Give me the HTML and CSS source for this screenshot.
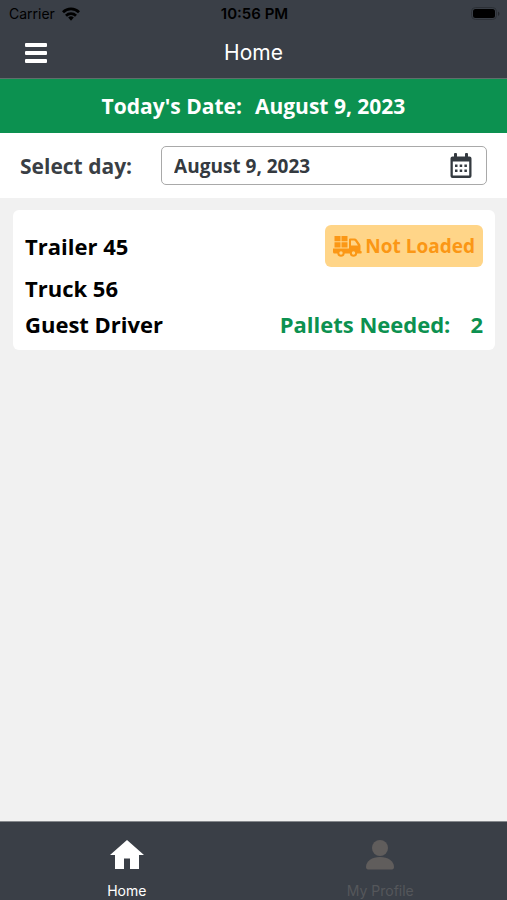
FILE: index.html
```html
<!DOCTYPE html>
<html lang="en">
<head>
    <meta charset="utf-8">
    <meta name="viewport" content="width=device-width, initial-scale=1">
    <title>Home</title>
    <link rel="stylesheet" href="styles.css">
</head>
<body>

<header class="top">
    <div class="status">
        <div class="carrier">
            <span>Carrier</span>
            <svg width="18" height="14" viewBox="0 0 18 14" fill="none" stroke="currentColor" stroke-width="2.8">
                <path d="M1 5.200a11.500 11.500 0 0 1 16 0"/>
                <path d="M4 8.700a7.200 7.200 0 0 1 10 0"/>
                <path d="M9 13.800l-2.800-3.200a4.200 4.200 0 0 1 5.600 0z" fill="currentColor" stroke="none"/>
            </svg>
        </div>
        <span class="time">10:56 PM</span>
        <svg class="battery" width="29" height="14" viewBox="0 0 29 14">
            <rect x="0.5" y="0.5" width="25" height="12" rx="4" fill="none" stroke="#2c3036"/>
            <rect x="2" y="2" width="22" height="9" rx="2.5" fill="#000"/>
            <path d="M27 4.500v4.500c2-1 2-3.500 0-4.500z" fill="#24272c"/>
        </svg>
    </div>
    <div class="navbar">
        <button class="menu" type="button" aria-label="Menu">
            <svg width="22" height="20" viewBox="0 0 22 20" fill="#fff">
                <rect y="0" width="22" height="4" rx="1"/>
                <rect y="8" width="22" height="4" rx="1"/>
                <rect y="16" width="22" height="4" rx="1"/>
            </svg>
        </button>
        <h1>Home</h1>
    </div>
</header>

<div class="today">
    <span>Today's Date:</span>
    <span>August 9, 2023</span>
</div>

<div class="picker">
    <label for="day">Select day:</label>
    <div class="field">
        <input type="text" id="day" value="August 9, 2023" readonly>
        <button class="calendar" type="button" aria-label="Open calendar">
            <svg width="22" height="26" viewBox="0 0 22 26" fill="#343a40">
                <path fill-rule="evenodd" d="M2.500 3.500H4V1a1 1 0 0 1 1-1h1a1 1 0 0 1 1 1v2.500h8V1a1 1 0 0 1 1-1h1a1 1 0 0 1 1 1v2.500h1.500A2 2 0 0 1 21.500 5.500V23a2 2 0 0 1-2 2h-17a2 2 0 0 1-2-2V5.500a2 2 0 0 1 2-2zM2.800 8.500v14h16.400v-14z"/>
                <path d="M5 11.500h2.500V14H5zM9.700 11.500h2.500V14H9.700zM14.400 11.500h2.500V14h-2.500zM5 16.500h2.500V19H5zM9.700 16.500h2.500V19H9.700zM14.400 16.500h2.500V19h-2.500z"/>
            </svg>
        </button>
    </div>
</div>

<main>
    <article class="card">
        <div class="row trailer">
            <span>Trailer 45</span>
            <span class="badge">
                <svg width="29" height="21" viewBox="0 0 29 21" fill="#fb9715">
                    <path d="M1.500 0h6v5.200h-6zM8.500 0h6v5.200h-6zM1.500 6.200h6v5.200h-6zM8.500 6.200h6v5.200h-6z"/>
                    <path fill-rule="evenodd" d="M0 12.500h16V3.500a1 1 0 0 1 1-1h4.500c1 0 1.800.4 2.400 1.200l3 4.300c.4.600.6 1.200.6 2v5h.500a.7.700 0 0 1 .7.700v1a.8.800 0 0 1-.8.800H1.500A1.500 1.500 0 0 1 0 16zM18 4.500V9.500h7l-2.800-4.200c-.3-.5-.7-.8-1.200-.8z"/>
                    <circle cx="8" cy="17" r="2.700" fill="#ffd588" stroke="#fb9715" stroke-width="2"/>
                    <circle cx="20.500" cy="17" r="2.700" fill="#ffd588" stroke="#fb9715" stroke-width="2"/>
                </svg>
                Not Loaded
            </span>
        </div>
        <div class="row">
            <span>Truck 56</span>
        </div>
        <div class="row">
            <span>Guest Driver</span>
            <span class="pallets"><span>Pallets Needed:</span><span>2</span></span>
        </div>
    </article>
</main>

<nav class="tabs">
    <a class="tab active" href="#home">
        <svg width="34" height="30" viewBox="0 0 34 30" fill="currentColor">
            <path d="M17 0l17 15h-5v14h-9V18.500h-6V29H5V15H0z"/>
        </svg>
        <span>Home</span>
    </a>
    <a class="tab" href="#profile">
        <svg width="34" height="30" viewBox="0 0 34 30" fill="#605d5c">
            <circle cx="17" cy="8" r="8"/>
            <path d="M3 27c0-6 6-10 14-10s14 4 14 10c0 1.500-.8 2.500-2 2.500H5c-1.200 0-2-1-2-2.500z"/>
        </svg>
        <span>My Profile</span>
    </a>
</nav>

</body>
</html>
```
FILE: styles.css
```css
* {
    box-sizing: border-box;
}
body {
    margin: 0;
    height: 100vh;
    display: flex;
    flex-direction: column;
    overflow: hidden;
    background-color: #f1f1f1;
    font-family: "Open Sans", "Noto Sans", sans-serif;
    font-size: 22px;
    font-weight: 700;
    color: #000;
}
svg {
    display: block;
    flex: none;
}
button {
    padding: 0;
    border: 0;
    background: none;
    cursor: pointer;
}

/* status bar and title */
.top {
    background-color: #3a3f47;
    border-bottom: 1px solid #5f6f6c;
    font-family: Inter, "Liberation Sans", sans-serif;
}
.status {
    display: grid;
    grid-template-columns: 1fr auto 1fr;
    align-items: center;
    height: 27px;
    padding: 0 7px 0 9px;
    font-size: 14px;
    font-weight: 400;
}
.carrier {
    display: flex;
    align-items: center;
    gap: 7px;
}
.time {
    font-size: 15px;
    font-weight: 600;
}
.battery {
    justify-self: end;
}
.navbar {
    display: grid;
    grid-template-columns: 1fr auto 1fr;
    align-items: center;
    height: 51px;
    padding: 0 25px;
}
.navbar h1 {
    margin: 0;
    font-size: 21px;
    font-weight: 400;
    color: #fff;
}
.menu {
    justify-self: start;
}

.today {
    display: flex;
    justify-content: center;
    gap: 13px;
    padding: 12px 0;
    font-size: 21px;
    line-height: 30px;
    background-color: #0c9150;
    color: #fff;
}

/* day picker */
.picker {
    display: flex;
    align-items: center;
    gap: 29px;
    padding: 13px 20px;
    background-color: #fff;
    font-size: 21px;
    color: #3a3f45;
}
.field {
    flex: 1;
    display: flex;
    align-items: center;
    height: 39px;
    padding: 0 14px 0 12px;
    border: 1px solid #a9a9a9;
    border-radius: 5px;
}
.field input {
    flex: 1;
    min-width: 0;
    padding: 0;
    border: 0;
    outline: 0;
    background: none;
    font: inherit;
    font-size: 19px;
    color: #343a40;
}

/* delivery list */
main {
    flex: 1;
    padding: 12px 12px 12px 13px;
}
.card {
    padding: 15px 12px 8px;
    border-radius: 6px;
    background-color: #fff;
}
.row {
    display: flex;
    align-items: center;
    justify-content: space-between;
    line-height: 36px;
}
.trailer {
    margin-bottom: 3px;
}
.badge {
    display: flex;
    align-items: center;
    gap: 3px;
    height: 42px;
    padding: 0 8px;
    border-radius: 6px;
    background-color: #ffd588;
    font-size: 19px;
    color: #fb9715;
}
.pallets {
    display: flex;
    gap: 20px;
    color: #0c9150;
}

/* bottom tabs */
.tabs {
    display: flex;
    height: 79px;
    border-top: 1px solid #85888c;
    background-color: #3a3f47;
    font-family: Inter, "Liberation Sans", sans-serif;
    font-size: 14px;
    font-weight: 400;
}
.tab {
    flex: 1;
    display: flex;
    flex-direction: column;
    align-items: center;
    gap: 12px;
    padding-top: 18px;
    line-height: 18px;
    color: #55575b;
    text-decoration: none;
}
.tab.active {
    color: #fff;
}
```
